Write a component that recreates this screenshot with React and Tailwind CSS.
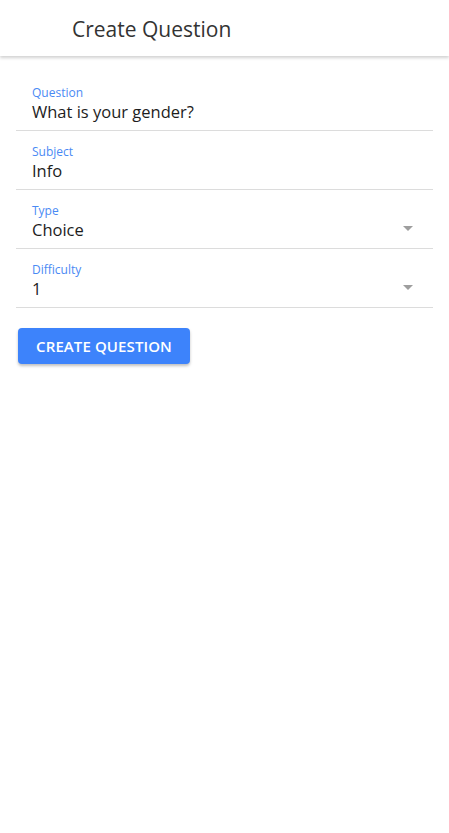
import { useState } from 'react'

const font = { fontFamily: '"Open Sans", "Noto Sans", sans-serif' }

function Field({ label, value, select }) {
  return (
    <div className="relative h-[59px] border-b border-[#dcdcdc] pt-[13px] pl-4">
      <div className="text-[12px] leading-[16px] text-[#4a8af4]">{label}</div>
      <div className="text-[16.5px] leading-[22px] text-[#1d1d1d]">{value}</div>
      {select && (
        <svg className="absolute right-[20px] top-[36px] w-[10px] h-[5px]" viewBox="0 0 10 5">
          <path d="M0 0h10L5 5z" fill="#9e9e9e" />
        </svg>
      )}
    </div>
  )
}

export default function App() {
  const [fields] = useState([
    { label: 'Question', value: 'What is your gender?' },
    { label: 'Subject', value: 'Info' },
    { label: 'Type', value: 'Choice', select: true },
    { label: 'Difficulty', value: '1', select: true },
  ])

  return (
    <div className="min-h-screen bg-white" style={font}>
      {/* App bar */}
      <header className="h-[56px] flex items-center pl-[72px] bg-white shadow-[0_2px_3px_rgba(0,0,0,0.18)]">
        <h1 className="text-[21px] leading-[28px] pt-[2px] text-[#333]">Create Question</h1>
      </header>

      <div className="px-4 pt-[16px]">
        {fields.map((f) => (
          <Field key={f.label} {...f} />
        ))}

        <button className="mt-[20px] ml-[2px] h-[36px] w-[172px] rounded-[4px] bg-[#3d83fb] text-white text-[15px] font-semibold uppercase tracking-[0.1px] shadow-[0_2px_3px_rgba(0,0,0,0.25)]">
          Create Question
        </button>
      </div>
    </div>
  )
}
